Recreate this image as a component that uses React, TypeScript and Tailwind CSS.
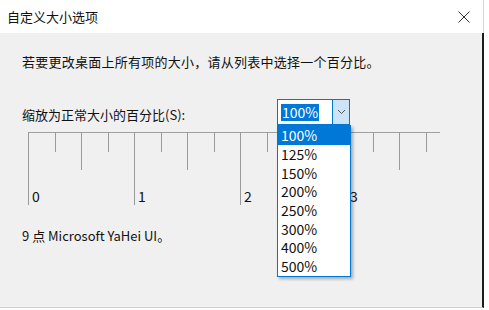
const FONT = "font-['Noto_Sans_CJK_SC','Noto_Sans',sans-serif]";

const OPTIONS = ["100%", "125%", "150%", "200%", "250%", "300%", "400%", "500%"];

function Ruler() {
  const ticks = Array.from({ length: 16 }, (_, k) => k);
  return (
    <svg width="416" height="74" className="block" shapeRendering="crispEdges">
      <line x1="0.5" y1="0.5" x2="411.5" y2="0.5" stroke="#a0a0a0" />
      {ticks.map((k) => {
        const x = Math.round(k * 26.5) + 0.5;
        const len = k % 4 === 0 ? 73 : k % 2 === 0 ? 38 : 20;
        return <line key={k} x1={x} y1="0" x2={x} y2={len} stroke="#9a9a9a" />;
      })}
      {[0, 1, 2, 3].map((n) => (
        <text
          key={n}
          x={n * 106 + 4}
          y="70"
          fontSize="14"
          fill="#111"
          fontFamily="'Noto Sans CJK SC', 'Noto Sans', sans-serif"
          shapeRendering="auto"
        >
          {n}
        </text>
      ))}
    </svg>
  );
}

function Combo() {
  return (
    <div className="relative w-[73px] h-[26px] flex border border-[#0078d7] bg-white">
      <div className="flex-1 flex items-center pl-[3px]">
        <span className="bg-[#0078d7] text-white text-[14px] leading-[17px] px-[1px]">100%</span>
      </div>
      <div className="w-[17px] bg-[#cce4f7] border-l border-[#0078d7] flex items-center justify-center">
        <svg width="9" height="6" viewBox="0 0 9 6">
          <path d="M1 1 L4.5 4.5 L8 1" fill="none" stroke="#555" strokeWidth="1" />
        </svg>
      </div>
      <div className="absolute left-[-1px] top-[25px] w-[74px] bg-white border border-[#0078d7] shadow-[2px_2px_3px_rgba(0,0,0,0.3)]">
        {OPTIONS.map((o, i) => (
          <div
            key={o}
            className={
              i === 0
                ? "h-[18.7px] pl-[3px] flex items-center text-[14px] bg-[#0078d7] text-white"
                : "h-[18.7px] pl-[3px] flex items-center text-[14px] text-[#111]"
            }
          >
            {o}
          </div>
        ))}
      </div>
    </div>
  );
}

export default function App() {
  return (
    <div className={`w-[489px] h-[310px] bg-white overflow-hidden ${FONT}`}>
      <div className="w-[484px] h-[33px] bg-white border-r border-[#d4d4d4] flex items-center justify-between pl-[7px] pr-[13px]">
        <span className="text-[13px] leading-[18px] text-[#111]">自定义大小选项</span>
        <svg width="12" height="12" viewBox="0 0 12 12">
          <path d="M0.5 0.5 L11.5 11.5 M11.5 0.5 L0.5 11.5" stroke="#333" strokeWidth="1" />
        </svg>
      </div>
      <div className="w-[484px] h-[275px] bg-[#f0f0f0] border-r-2 border-r-[#1c1c1c] border-b border-b-[#cfcfcf] pl-[22px] pt-[20px] text-[13px] leading-[18px] text-[#111]">
        <p className="tracking-[0.25px]">若要更改桌面上所有项的大小，请从列表中选择一个百分比。</p>
        <div className="mt-[28px] flex items-start">
          <span className="w-[255px] mt-[7px]">缩放为正常大小的百分比(S):</span>
          <Combo />
        </div>
        <div className="mt-[7px] ml-[6px]">
          <Ruler />
        </div>
        <p className="mt-[21px]">9 点 Microsoft YaHei UI。</p>
      </div>
    </div>
  );
}
